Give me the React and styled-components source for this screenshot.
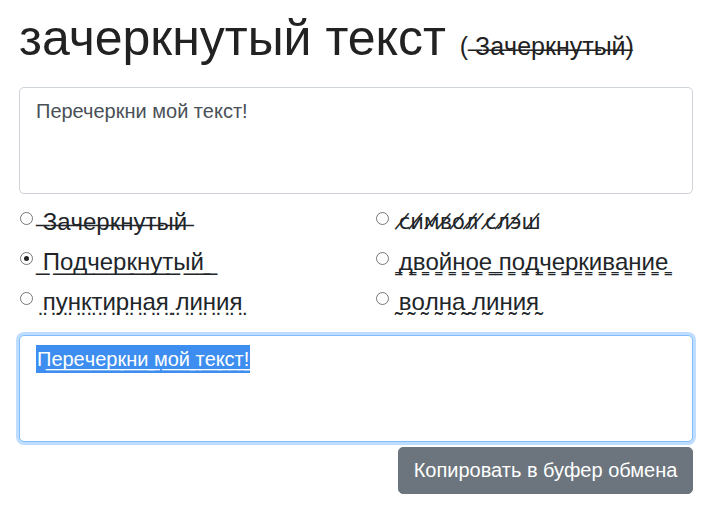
import React from "react";
import styled, { createGlobalStyle } from "styled-components";

const Global = createGlobalStyle`
  html, body { margin: 0; padding: 0; background: #fff; }
  body { font-family: "Liberation Sans", Arial, sans-serif; color: #212529; }
`;

const Page = styled.div`
  padding: 8px 22px 0 19px;
  display: flex;
  flex-direction: column;
`;

const Title = styled.h1`
  margin: 0;
  font-weight: 400;
  font-size: 50px;
  line-height: 60px;
  color: #222;
`;

const Small = styled.small`
  font-size: 25px;
  line-height: 1;
  color: #222;
`;

const Box = styled.div`
  box-sizing: border-box;
  height: 107px;
  margin-top: ${(p) => p.$mt || 0}px;
  border: 1px solid ${(p) => (p.$focus ? "#80bdff" : "#ced4da")};
  border-radius: 5px;
  padding: 8px 16px;
  font-size: 20px;
  line-height: 30px;
  color: #495057;
  background: #fff;
  box-shadow: ${(p) => (p.$focus ? "0 0 0 3px rgba(0,123,255,.25)" : "none")};
`;

const Selected = styled.span`
  background: #3d8ef0;
  color: #fff;
  padding: 3px 1px;
`;

const Options = styled.div`
  display: grid;
  grid-template-columns: 356px 1fr;
  row-gap: 4px;
  margin-top: 10px;
  margin-bottom: 15px;
`;

const Option = styled.label`
  display: flex;
  align-items: flex-start;
  line-height: 36px;
  color: #212529;
  white-space: pre;
  font-family: ${(p) =>
    p.$alt ? '"DejaVu Sans", sans-serif' : '"Liberation Sans", Arial, sans-serif'};
  font-size: ${(p) => (p.$alt ? "21px" : "24px")};
`;

const Radio = styled.input`
  appearance: none;
  box-sizing: border-box;
  flex: none;
  margin: 8px 3px 0 1px;
  width: 13px;
  height: 13px;
  border: 1px solid #767676;
  border-radius: 50%;
  background: #fff;
  display: grid;
  place-items: center;
  &:checked::after {
    content: "";
    width: 5px;
    height: 5px;
    border-radius: 50%;
    background: #222;
  }
`;

const Footer = styled.div`
  display: flex;
  justify-content: flex-end;
  margin-top: 5px;
`;

const Button = styled.button`
  background: #6c757d;
  color: #fff;
  border: 1px solid #6c757d;
  border-radius: 5px;
  font-family: "Liberation Sans", Arial, sans-serif;
  font-size: 20px;
  line-height: 29px;
  padding: 8px 10px;
  width: 295px;
`;

const each = (s, c) => Array.from(s).map((ch) => ch + c).join("");
const mark = (s, c) => " " + c + each(s, c);

const options = [
  { t: mark("Зачеркнутый", "\u0336") + " ", checked: false },
  { t: " " + each("символ слэш", "\u0338"), checked: false, alt: true },
  { t: mark("Подчеркнутый", "\u0332") + " \u0332", checked: true },
  { t: mark("двойное подчеркивание", "\u0333") + " ", checked: false },
  { t: mark("пунктирная линия", "\u0324"), checked: false },
  { t: mark("волна линия", "\u0330"), checked: false },
];

export default function App() {
  return (
    <>
      <Global />
      <Page>
        <Title>
          зачеркнутый текст <Small>({mark("Зачеркнутый", "\u0336")})</Small>
        </Title>
        <Box $mt={19}>Перечеркни мой текст!</Box>
        <Options>
          {options.map((o, i) => (
            <Option key={i} $alt={o.alt}>
              <Radio type="radio" name="style" defaultChecked={o.checked} />
              <span>{o.t}</span>
            </Option>
          ))}
        </Options>
        <Box $focus>
          <Selected>{each("Перечеркни мой текст!", "\u0332")}</Selected>
        </Box>
        <Footer>
          <Button>Копировать в буфер обмена</Button>
        </Footer>
      </Page>
    </>
  );
}
